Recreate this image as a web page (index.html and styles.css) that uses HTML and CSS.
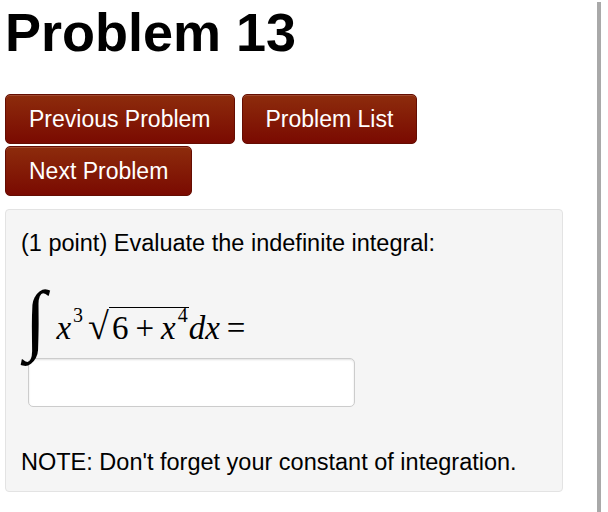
FILE: index.html
```html
<html>

<head>
  <meta content="text/html;charset=utf-8" http-equiv="Content-Type" />
  <link rel="stylesheet" href="styles.css">
</head>

<body>
  <div class="page">
    <h1 class="title">Problem 13</h1>

    <div class="nav">
      <a class="btn" href="#">Previous Problem</a>
      <a class="btn" href="#">Problem List</a>
      <a class="btn" href="#">Next Problem</a>
    </div>

    <div class="problem">
      <p class="prompt">(1 point) Evaluate the indefinite integral:</p>

      <div class="math"><span class="int">∫</span><i class="mi">x</i><sup class="sup">3</sup><span class="sqrt"><span class="radical">√</span><span class="radicand">6<span class="mo">+</span><i class="mi">x</i><sup class="sup">4</sup></span></span><i class="mi dx">dx</i><span class="mo eq">=</span></div>

      <input class="answer" type="text" name="AnSwEr0001" />

      <p class="note">NOTE: Don't forget your constant of integration.</p>
    </div>
  </div>
</body>

</html>
```

FILE: styles.css
```css
html {
  font-family: "Liberation Sans", Arial, sans-serif;
  color: #000;
}

body {
  margin: 0;
  background: #fff;
}

.page {
  width: 601px;
  min-height: 512px;
  box-sizing: border-box;
  border-right: 4px solid #a9a9a9;
}

.title {
  margin: 2px 0 0 5px;
  font-size: 54px;
  line-height: 60px;
  font-weight: bold;
}

/* nav buttons */
.nav {
  display: flex;
  flex-wrap: wrap;
  column-gap: 7px;
  row-gap: 2px;
  margin: 32px 0 0 5px;
}

.btn {
  display: block;
  height: 48px;
  padding: 0 23px;
  font-size: 23px;
  line-height: 48px;
  color: #fff;
  text-decoration: none;
  background: linear-gradient(#8d2c0c, #7a0a01);
  border: 1px solid #650d02;
  border-radius: 5px;
  box-shadow: inset 0 1px 0 rgba(255, 255, 255, 0.15);
}

/* problem box */
.problem {
  width: 558px;
  box-sizing: border-box;
  margin: 13px 0 0 5px;
  padding: 18px 15px 14px;
  background-color: #f5f5f5;
  border: 1px solid #e3e3e3;
  border-radius: 4px;
}

.prompt,
.note {
  margin: 0;
  font-size: 23.5px;
  line-height: 30px;
}

.math {
  display: flex;
  align-items: baseline;
  height: 64px;
  margin-top: 35px;
  padding-left: 4px;
  font-family: "Liberation Serif", "Times New Roman", serif;
  font-size: 33px;
  line-height: 40px;
}

.int {
  display: inline-block;
  font-size: 78px;
  line-height: 40px;
  margin-right: 10px;
  transform: translateY(6px);
}

.sup {
  font-size: 20px;
  vertical-align: 0;
  position: relative;
  top: -17px;
  margin-left: 2px;
}

.sqrt {
  display: inline-flex;
  align-items: baseline;
  margin-left: 5px;
}

.radical {
  display: inline-block;
  font-size: 38px;
}

.radicand {
  border-top: 1.5px solid #000;
  padding: 0 1px 0 3px;
  line-height: 40px;
}

.mo {
  margin: 0 7px;
}

.eq {
  margin-left: 7px;
}

.answer {
  display: block;
  width: 327px;
  height: 49px;
  box-sizing: border-box;
  margin: 1px 0 0 7px;
  background: #fff;
  border: 1px solid #ccc;
  border-radius: 5px;
  box-shadow: inset 0 1px 2px rgba(0, 0, 0, 0.12);
}

.note {
  margin-top: 40px;
}
```
